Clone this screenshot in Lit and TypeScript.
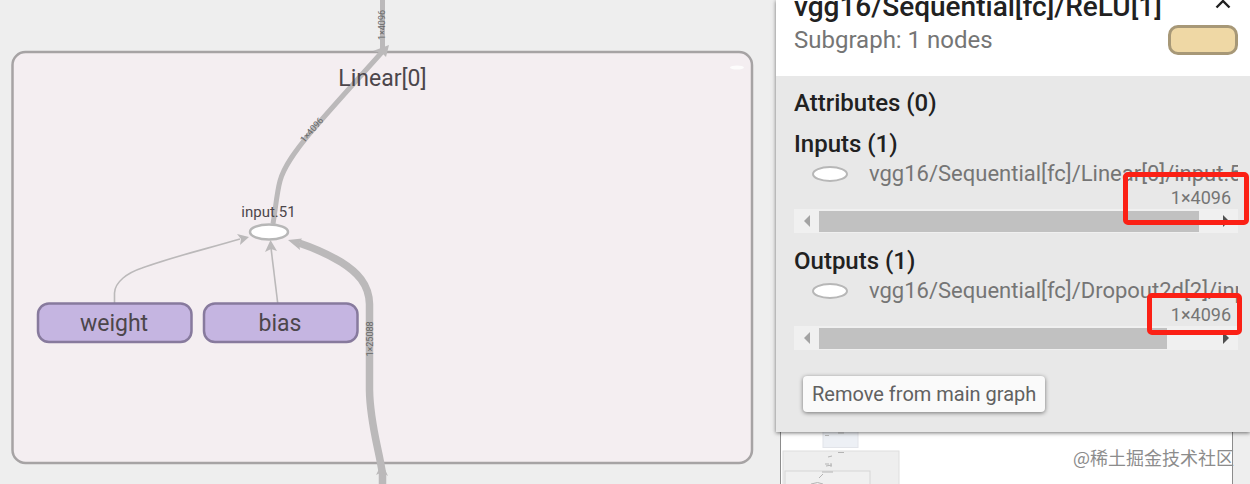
import { LitElement, html, svg, css } from "lit";
import { customElement, property } from "lit/decorators.js";
import { classMap } from "lit/directives/class-map.js";

/** The zoomable canvas with the nodes and edges of the model. */
@customElement("graph-scene")
class GraphScene extends LitElement {
  static styles = css`
    :host {
      display: block;
      overflow: hidden;
      background: #eee;
    }
    .canvas {
      display: block;
      width: 100%;
      height: 100%;
      font-family: Roboto, sans-serif;
    }
    .group {
      fill: #f4eef1;
      stroke: #a6a3a4;
      stroke-width: 2.5;
    }
    .param {
      fill: #c5b5e1;
      stroke: #877a9d;
      stroke-width: 2.5;
    }
    .op {
      fill: #fff;
      stroke: #b7b7b7;
      stroke-width: 2.5;
    }
    .edge {
      fill: none;
      stroke: #bbb9ba;
    }
    .thin {
      stroke-width: 1.6;
    }
    .mid {
      stroke-width: 5;
    }
    .thick {
      stroke-width: 7.5;
    }
    .head {
      fill: #bbb9ba;
    }
    .name {
      font-size: 23px;
      fill: #4c464b;
      text-anchor: middle;
    }
    .small {
      font-size: 15px;
      fill: #4c464b;
      text-anchor: middle;
    }
    .shape {
      font-size: 9px;
      fill: #666;
      text-anchor: middle;
    }
  `;

  private param(x: number, label: string) {
    return svg`
      <rect class="param" x=${x} y="303.5" width="153.5" height="38.5" rx="11"></rect>
      <text class="name" x=${x + 76} y="331">${label}</text>`;
  }

  render() {
    return html`
      <svg class="canvas" role="img" aria-label="Linear[0] subgraph">
        <rect class="group" x="12.5" y="52" width="739.5" height="411" rx="13"></rect>
        <ellipse cx="737" cy="67.5" rx="7" ry="2" fill="#fff" opacity="0.8"></ellipse>

        <path class="edge mid" d="M382.500 0V50"></path>
        <path class="edge mid" d="M273 224C276 205 277 192 280 181C284 166 296 150 311 132C334 105 358 79 383 51"></path>
        <path class="head" d="M389 45L386 57L382 53L373 51Z"></path>

        <path class="edge thin" d="M114.500 303V293C115 282 127 273 142 268C172 257 206 249 240 239"></path>
        <path class="head" d="M249 237L237 234L241 239L240 245Z"></path>
        <path class="edge thin" d="M277.700 303L271 248"></path>
        <path class="head" d="M270.500 240L265 252L271 249L277 251Z"></path>
        <path class="edge thick" d="M382.500 484V474C379 449 370 424 369.500 390V304C369 284 357 272 341 262C326 253 311 247 299 243"></path>
        <path class="head" d="M288 240L302 238.500L299 243L300 250Z"></path>
        <path class="head" d="M382 463L388 476L382 472L376 475Z"></path>

        ${this.param(38, "weight")} ${this.param(204, "bias")}
        <ellipse class="op" cx="269" cy="232" rx="19" ry="7.500"></ellipse>

        <text class="name" x="382.500" y="86">Linear[0]</text>
        <text class="small" x="268.500" y="217">input.51</text>
        <text class="shape" transform="translate(385 25) rotate(-90)">1×4096</text>
        <text class="shape" transform="translate(314 132) rotate(-49)">1×4096</text>
        <text class="shape" transform="translate(373 339) rotate(-90)">1×25088</text>
      </svg>
    `;
  }
}

/** One tensor of the selected node, with its horizontal scrollbar. */
@customElement("tensor-list")
class TensorList extends LitElement {
  @property() heading = "";
  @property() path = "";
  @property() shape = "";
  @property({ type: Number }) visible = 100;
  @property({ type: Boolean }) wide = false;

  static styles = css`
    :host {
      display: block;
    }
    .heading {
      margin: 0 0 6px;
      font-size: 24px;
      font-weight: 500;
      line-height: 24px;
      color: #212121;
    }
    .item {
      position: relative;
      color: #757575;
    }
    .row {
      display: flex;
      align-items: center;
      gap: 21px;
      padding-left: 18px;
      height: 24px;
      overflow: hidden;
    }
    .icon {
      flex: none;
      width: 36px;
      height: 16px;
    }
    .path {
      font-size: 22px;
      line-height: 24px;
      white-space: nowrap;
      color: inherit;
      text-decoration: none;
    }
    .shape {
      padding-right: 7px;
      font-size: 18px;
      line-height: 23px;
      text-align: right;
    }
    .scroll {
      display: grid;
      grid-template-columns: 25px 1fr 25px;
      height: 24px;
      background: #f0f0f0;
    }
    .arrow {
      display: grid;
      place-items: center;
      padding: 0;
      border: 0;
      background: none;
      color: #505050;
    }
    .arrow:disabled {
      color: #a3a3a3;
    }
    .track {
      padding: 2px 0 1px;
    }
    .thumb {
      height: 100%;
      background: #c1c1c1;
    }
    .mark {
      position: absolute;
      box-sizing: border-box;
      border: 5px solid #fb2015;
      border-radius: 5px;
      top: 14px;
      right: -4px;
      width: 95px;
      height: 42px;
      pointer-events: none;
    }
    .mark.wide {
      top: 10px;
      right: -11px;
      width: 126px;
      height: 53px;
    }
  `;

  render() {
    return html`
      <h3 class="heading">${this.heading}</h3>
      <div class="item">
        <div class="row">
          <svg class="icon" viewBox="0 0 36 16" aria-hidden="true">
            <ellipse cx="18" cy="8" rx="17" ry="7" fill="#fff" stroke="#b7b7b7" stroke-width="2"></ellipse>
          </svg>
          <a class="path" href="#">${this.path}</a>
        </div>
        <div class="shape">${this.shape}</div>
        <div class="scroll">
          <button class="arrow" aria-label="Scroll left" disabled>
            <svg width="6" height="12" viewBox="0 0 6 12"><path d="M6 0V12L0 6Z" fill="currentColor"></path></svg>
          </button>
          <div class="track">
            <div class="thumb" style="width:${this.visible}%"></div>
          </div>
          <button class="arrow" aria-label="Scroll right">
            <svg width="6" height="12" viewBox="0 0 6 12"><path d="M0 0V12L6 6Z" fill="currentColor"></path></svg>
          </button>
        </div>
        <div class=${classMap({ mark: true, wide: this.wide })}></div>
      </div>
    `;
  }
}

/** The card that describes the selected node. */
@customElement("node-info")
class NodeInfo extends LitElement {
  static styles = css`
    :host {
      display: block;
      position: relative;
      background: #e8e8e8;
      box-shadow: 0 1px 4px rgba(0, 0, 0, 0.55);
    }
    .head {
      display: grid;
      grid-template-columns: 1fr auto;
      padding: 0 12px 24px 18px;
      background: #fff;
    }
    .title {
      margin: -7px 0 0;
      font-size: 28px;
      font-weight: 500;
      line-height: 28px;
      white-space: nowrap;
      color: #212121;
    }
    .sub {
      margin-top: 7px;
      font-size: 24px;
      line-height: 24px;
      color: #757575;
    }
    .side {
      display: flex;
      flex-direction: column;
      align-items: flex-end;
      gap: 16px;
    }
    .toggle {
      display: block;
      height: 9px;
      margin-right: 7px;
      padding: 0;
      border: 0;
      background: none;
    }
    .toggle svg {
      display: block;
    }
    .swatch {
      box-sizing: border-box;
      width: 70px;
      height: 30px;
      margin-bottom: -3px;
      border: 3px solid #a79877;
      border-radius: 10px;
      background: #efd8a5;
    }
    .body {
      display: flex;
      flex-direction: column;
      gap: 16px;
      padding: 15px 12px 20px 18px;
    }
    .heading {
      margin: 0 0 1px;
      font-size: 24px;
      font-weight: 500;
      line-height: 24px;
      color: #212121;
    }
    .remove {
      align-self: flex-start;
      height: 36px;
      margin: 10px 0 0 9px;
      padding: 0 9px;
      border: 0;
      border-radius: 4px;
      background: #fafafa;
      box-shadow: 0 1px 4px rgba(0, 0, 0, 0.5);
      font: 20px Roboto, sans-serif;
      color: #616161;
    }
  `;

  render() {
    return html`
      <header class="head">
        <div>
          <h2 class="title">vgg16/Sequential[fc]/ReLU[1]</h2>
          <div class="sub">Subgraph: 1 nodes</div>
        </div>
        <div class="side">
          <button class="toggle" aria-label="Collapse">
            <svg width="16" height="9" viewBox="0 0 16 9">
              <path d="M1.500 7.500L8 1L14.500 7.500" fill="none" stroke="#212121" stroke-width="2.400"></path>
            </svg>
          </button>
          <div class="swatch"></div>
        </div>
      </header>
      <div class="body">
        <h3 class="heading">Attributes (0)</h3>
        <tensor-list
          heading="Inputs (1)"
          path="vgg16/Sequential[fc]/Linear[0]/input.51"
          shape="1×4096"
          .visible=${96.5}
          wide
        ></tensor-list>
        <tensor-list
          heading="Outputs (1)"
          path="vgg16/Sequential[fc]/Dropout2d[2]/input.53"
          shape="1×4096"
          .visible=${88.3}
        ></tensor-list>
        <button class="remove">Remove from main graph</button>
      </div>
    `;
  }
}

@customElement("app-root")
class AppRoot extends LitElement {
  static styles = css`
    :host {
      display: grid;
      grid-template-columns: minmax(0, 1fr) 474px;
      height: 100vh;
      overflow: hidden;
      background: #eee;
      font-family: Roboto, sans-serif;
    }
    .side {
      display: flex;
      flex-direction: column;
      min-height: 0;
    }
    .minimap {
      flex: 1;
      display: flex;
      justify-content: space-between;
      margin: 0 17px 0 4px;
      border: solid #8c8c8c;
      border-width: 0 1px;
      background: #fff;
    }
    .thumb {
      flex: none;
      width: 130px;
      height: 52px;
    }
    .credit {
      margin: 13px -2px 0 0;
      font: 18px/24px "Noto Sans CJK SC", sans-serif;
      white-space: nowrap;
      color: #8c8c8c;
    }
  `;

  render() {
    return html`
      <graph-scene></graph-scene>
      <div class="side">
        <node-info></node-info>
        <div class="minimap">
          <svg class="thumb" viewBox="0 0 130 52" aria-hidden="true">
            <rect x="42" y="-4" width="35" height="19.500" fill="#edf0f5" stroke="#e2e4e9"></rect>
            <path d="M57 1h6M44 3.500h4" stroke="#bbb"></path>
            <rect x="2" y="19" width="116" height="40" fill="#eee" stroke="#dedede"></rect>
            <rect x="4" y="39" width="85" height="30" fill="#f0f0f0" stroke="#d6d6d6"></rect>
            <path d="M57 20.500h6M47 25l4-1M44 32h4M50 31v4M45 34l6-1M41 40h11M42 42l-4 4M30 52q7-3 12 0" fill="none" stroke="#b4b4b4"></path>
          </svg>
          <div class="credit">@稀土掘金技术社区</div>
        </div>
      </div>
    `;
  }
}
